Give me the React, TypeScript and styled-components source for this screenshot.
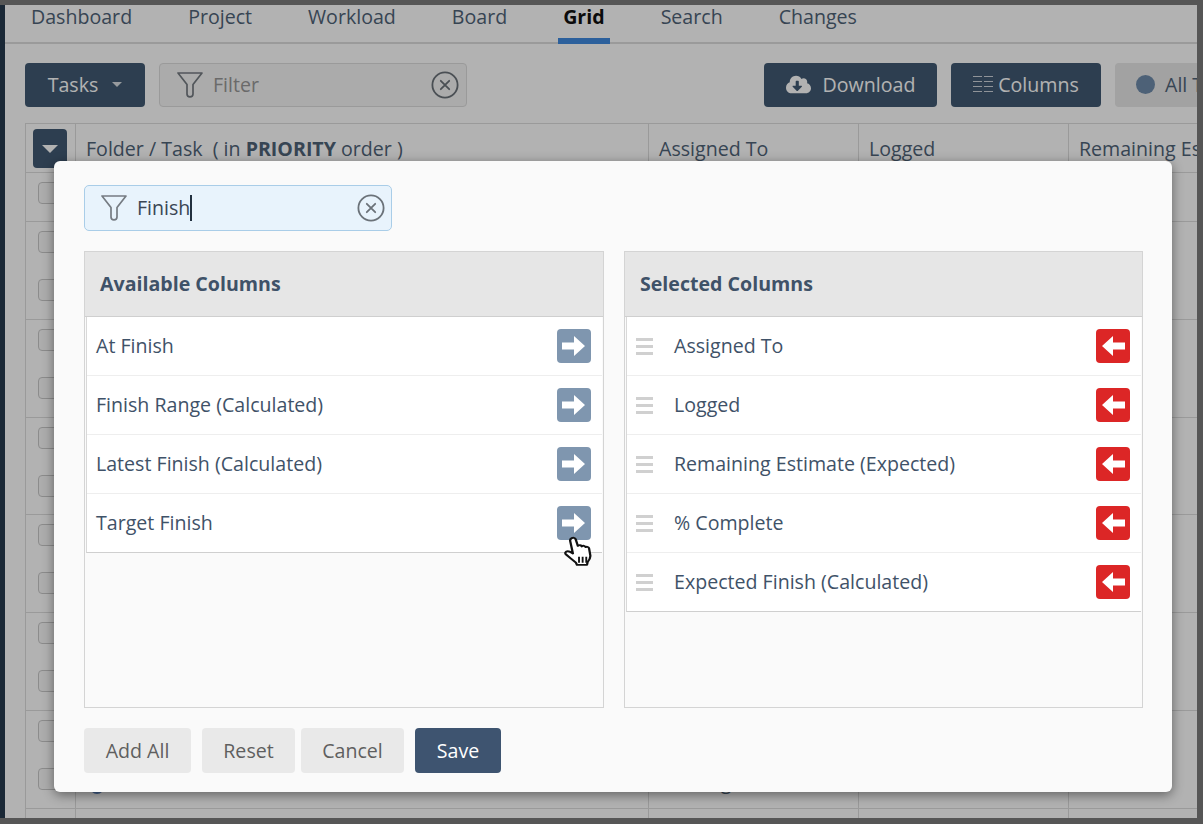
import React from 'react';
import styled, { createGlobalStyle } from 'styled-components';
import { FaCloudDownloadAlt } from 'react-icons/fa';

const TABS = ['Dashboard', 'Project', 'Workload', 'Board', 'Grid', 'Search', 'Changes'];
const AVAILABLE = ['At Finish', 'Finish Range (Calculated)', 'Latest Finish (Calculated)', 'Target Finish'];
const SELECTED = ['Assigned To', 'Logged', 'Remaining Estimate (Expected)', '% Complete', 'Expected Finish (Calculated)'];
const ROW_CHECKS = [1, 2, 2, 2, 2, 2, 2, 1];

const FunnelIcon = () => (
  <svg width="28" height="28" viewBox="0 0 28 28" fill="none" stroke="#757b82" strokeWidth="1.7" strokeLinejoin="round">
    <path d="M2 2h24L17 13.500V23c0 1.500-1 2.800-3 2.800s-3-1.300-3-2.800V13.500z" />
  </svg>
);

const ClearIcon = () => (
  <svg width="28" height="28" viewBox="0 0 28 28" fill="none" stroke="#6b7279" strokeWidth="1.800" strokeLinecap="round">
    <circle cx="14" cy="14" r="12.6" />
    <path d="M9.800 9.800l8.400 8.400M18.200 9.800l-8.400 8.400" />
  </svg>
);

const ColumnsIcon = () => (
  <svg width="20" height="18" viewBox="0 0 20 18" fill="none" stroke="#fff" strokeWidth="1" opacity="0.75">
    <path d="M0 1.500h9M11 1.500h9M0 6.500h9M11 6.500h9M0 11.500h9M11 11.500h9M0 16.500h9M11 16.500h9" />
  </svg>
);

const ArrowRightIcon = () => (
  <svg width="24" height="22" viewBox="0 0 24 22" fill="#fff">
    <path d="M0 7.500h12V1l11 10-11 10v-6.500H0z" />
  </svg>
);

const ArrowLeftIcon = () => (
  <svg width="24" height="22" viewBox="0 0 24 22" fill="#fff">
    <path d="M24 7.500H12V1L1 11l11 10v-6.500h12z" />
  </svg>
);

const HandCursor = () => (
  <svg width="29" height="31" viewBox="0 0 28 36" preserveAspectRatio="none">
    <path
      d="M7.500 2.500c1.800-1 3.400 0 3.900 1.700l2 7.300c1.200-1.400 3.300-1 3.800.6 1.100-1.200 3.200-.8 3.700.8 1.300-.8 3 0 3.300 1.500l1.200 8c.4 3-1 5.500-2.600 7.800l-.6 3.300H12.500l-1-2.500C8.500 28 5 24.500 2 21.500c-1.500-1.600-.5-3.800 1.600-3.800 1.500 0 3.400 1.300 5 2.600L6 6c-.3-1.500.3-2.800 1.500-3.500z"
      fill="#fff"
      stroke="#111"
      strokeWidth="2.200"
      strokeLinejoin="round"
    />
    <path d="M14.500 24v7M18 24v7M21.500 24v7" stroke="#111" strokeWidth="1.800" />
  </svg>
);

const App: React.FC = () => (
  <>
    <GlobalStyle />
    <Frame>
      <SideBar />
      <Page>
        <TabBar>
          {TABS.map((tab) => (
            <Tab key={tab} $active={tab === 'Grid'}>{tab}</Tab>
          ))}
        </TabBar>
        <Toolbar>
          <DarkButton $width={120}>
            Tasks <Caret />
          </DarkButton>
          <PageFilter>
            <FunnelIcon />
            <FilterHint>Filter</FilterHint>
            <ClearIcon />
          </PageFilter>
          <ToolbarRight>
            <DarkButton $width={173}>
              <FaCloudDownloadAlt size={25} /> Download
            </DarkButton>
            <DarkButton $width={150} $tight>
              <ColumnsIcon /> Columns
            </DarkButton>
            <AllButton>
              <Dot /> All Tasks
            </AllButton>
          </ToolbarRight>
        </Toolbar>
        <Table>
          <HeaderRow>
            <Cell $first>
              <MenuToggle />
            </Cell>
            <Cell>
              <span>Folder / Task &nbsp;( in <b>PRIORITY</b> order )</span>
            </Cell>
            <Cell>Assigned To</Cell>
            <Cell>Logged</Cell>
            <Cell>Remaining Estimate</Cell>
          </HeaderRow>
          {ROW_CHECKS.map((count, i) => (
            <BodyRow key={i} $tall={count === 2}>
              <CheckCell>
                {Array.from({ length: count }).map((_, j) => (
                  <CheckBox key={j} />
                ))}
              </CheckCell>
              <BodyCell>{i === 6 && <StatusDot />}</BodyCell>
              <BodyCell>{i === 6 && <AssigneeText>Unassigned</AssigneeText>}</BodyCell>
              <BodyCell />
              <BodyCell />
            </BodyRow>
          ))}
        </Table>
        <Overlay />
        <Modal>
          <ModalFilter>
            <FunnelIcon />
            <FilterValue>
              Finish<TextCaret />
            </FilterValue>
            <ClearIcon />
          </ModalFilter>
          <Panels>
            <Panel>
              <PanelHeader>Available Columns</PanelHeader>
              <RowList>
                {AVAILABLE.map((name) => (
                  <ColumnRow key={name}>
                    <ColumnName>{name}</ColumnName>
                    <MoveButton $tone="add">
                      <ArrowRightIcon />
                    </MoveButton>
                  </ColumnRow>
                ))}
              </RowList>
            </Panel>
            <Panel>
              <PanelHeader>Selected Columns</PanelHeader>
              <RowList>
                {SELECTED.map((name) => (
                  <ColumnRow key={name}>
                    <DragHandle>
                      <i />
                      <i />
                      <i />
                    </DragHandle>
                    <ColumnName>{name}</ColumnName>
                    <MoveButton $tone="remove">
                      <ArrowLeftIcon />
                    </MoveButton>
                  </ColumnRow>
                ))}
              </RowList>
            </Panel>
          </Panels>
          <Actions>
            <GreyButton $width={107}>Add All</GreyButton>
            <GreyButton $width={93} $gap={11}>Reset</GreyButton>
            <GreyButton $width={103} $gap={6}>Cancel</GreyButton>
            <SaveButton>Save</SaveButton>
          </Actions>
        </Modal>
        <CursorSpot>
          <HandCursor />
        </CursorSpot>
      </Page>
    </Frame>
  </>
);

const GlobalStyle = createGlobalStyle`
  html, body {
    margin: 0;
    padding: 0;
    background: #565656;
  }
  * {
    box-sizing: border-box;
  }
  body {
    font-family: "Open Sans", "Noto Sans", sans-serif;
    font-size: 19.6px;
    color: #3f5268;
  }
`;

const Frame = styled.div`
  width: 1203px;
  height: 824px;
  padding: 5px 6px 6px 0;
  display: flex;
  overflow: hidden;
  background: #565656;
`;

const SideBar = styled.div`
  width: 5px;
  background: #1a2836;
  flex-shrink: 0;
`;

const Page = styled.div`
  position: relative;
  flex: 1;
  min-width: 0;
  overflow: hidden;
  background: #fff;
`;

const Overlay = styled.div`
  position: absolute;
  inset: 0;
  background: rgba(0, 0, 0, 0.3);
`;

const TabBar = styled.div`
  height: 39px;
  display: flex;
  gap: 46px;
  padding-left: 21px;
  border-bottom: 2px solid #ddd;
`;

const Tab = styled.div<{ $active?: boolean }>`
  height: 39px;
  padding: 0 5px;
  line-height: 24px;
  color: ${(p) => (p.$active ? '#111' : '#4f6378')};
  font-weight: ${(p) => (p.$active ? 700 : 400)};
  border-bottom: ${(p) => (p.$active ? '6px solid #3f8ae0' : 'none')};
`;

const Toolbar = styled.div`
  display: flex;
  align-items: center;
  gap: 14px;
  padding: 19px 0 16px 20px;
`;

const ToolbarRight = styled.div`
  margin-left: auto;
  margin-right: -88px;
  display: flex;
  gap: 14px;
`;

const DarkButton = styled.div<{ $width: number; $tight?: boolean }>`
  width: ${(p) => p.$width}px;
  height: 44px;
  padding-bottom: 2px;
  display: flex;
  align-items: center;
  justify-content: center;
  gap: ${(p) => (p.$tight ? 5 : 12)}px;
  background: #415a73;
  color: #fff;
  border-radius: 4px;
`;

const Caret = styled.span`
  width: 0;
  height: 0;
  margin-left: 2px;
  border: 5px solid transparent;
  border-top: 5px solid #d8dde2;
  border-bottom: 0;
`;

const PageFilter = styled.div`
  width: 308px;
  height: 44px;
  display: flex;
  align-items: center;
  gap: 9px;
  padding: 0 7px 0 16px;
  border: 1px solid #ddd;
  border-radius: 4px;
  background: #f5f5f5;
`;

const FilterHint = styled.span`
  flex: 1;
  padding-bottom: 2px;
  color: #999;
`;

const AllButton = styled.div`
  width: 170px;
  height: 44px;
  padding: 0 0 2px 21px;
  display: flex;
  align-items: center;
  gap: 10px;
  background: #e8e8e8;
  border-radius: 4px;
  color: #4f6378;
  white-space: nowrap;
`;

const Dot = styled.span`
  width: 19px;
  height: 19px;
  border-radius: 50%;
  background: #6f8cab;
`;

const Table = styled.div`
  margin-left: 20px;
  width: 1300px;
  border-top: 1px solid #ddd;
  border-left: 1px solid #ddd;
`;

const HeaderRow = styled.div`
  height: 49px;
  display: grid;
  grid-template-columns: 50px 573px 210px 210px 1fr;
  border-bottom: 1px solid #ddd;
`;

const Cell = styled.div<{ $first?: boolean }>`
  display: flex;
  align-items: center;
  padding-left: ${(p) => (p.$first ? 7 : 10)}px;
  border-right: 1px solid #ddd;
  color: #4f6378;
  white-space: nowrap;

  b {
    font-weight: 700;
  }
`;

const MenuToggle = styled.div`
  width: 34px;
  height: 39px;
  position: relative;
  border-radius: 4px;
  background: #415a73;

  &::after {
    content: '';
    position: absolute;
    left: 9px;
    top: 16px;
    border: 8px solid transparent;
    border-top: 8px solid #fff;
    border-bottom: 0;
  }
`;

const BodyRow = styled.div<{ $tall: boolean }>`
  height: ${(p) => (p.$tall ? 97.8 : 49)}px;
  display: grid;
  grid-template-columns: 50px 573px 210px 210px 1fr;
  border-bottom: 1px solid #ddd;
`;

const CheckCell = styled.div`
  display: flex;
  flex-direction: column;
  gap: 26px;
  padding: 9px 0 0 12px;
  border-right: 1px solid #ddd;
`;

const BodyCell = styled.div`
  position: relative;
  border-right: 1px solid #ddd;
`;

const StatusDot = styled.span`
  position: absolute;
  left: 14px;
  bottom: 14px;
  width: 14px;
  height: 14px;
  border-radius: 50%;
  background: #5b84c0;
`;

const AssigneeText = styled.span`
  position: absolute;
  left: 11px;
  bottom: 13px;
  color: #4f6378;
`;

const CheckBox = styled.div`
  width: 22px;
  height: 22px;
  border: 1px solid #c9c9c9;
  border-radius: 4px;
  background: #f8f8f8;
`;

const Modal = styled.div`
  position: absolute;
  left: 49px;
  top: 156px;
  width: 1118px;
  height: 631px;
  padding: 24px 29px 0 30px;
  background: #fafafa;
  border-radius: 6px;
  box-shadow: 0 3px 12px rgba(0, 0, 0, 0.45);
`;

const ModalFilter = styled.div`
  width: 308px;
  height: 46px;
  display: flex;
  align-items: center;
  gap: 9px;
  padding: 0 6px 0 15px;
  background: #e8f3fc;
  border: 1px solid #a9cde8;
  border-radius: 5px;
`;

const FilterValue = styled.span`
  flex: 1;
  padding-bottom: 1px;
  display: flex;
  align-items: center;
  color: #3a4654;
`;

const TextCaret = styled.span`
  width: 2px;
  height: 26px;
  background: #22303f;
`;

const Panels = styled.div`
  margin-top: 20px;
  display: grid;
  grid-template-columns: 520px 519px;
  gap: 20px;
`;

const Panel = styled.div`
  height: 457px;
  border: 1px solid #d4d4d4;
  background: #fafafa;
`;

const PanelHeader = styled.div`
  height: 65px;
  padding: 0 0 2px 15px;
  display: flex;
  align-items: center;
  background: #e6e6e6;
  border-bottom: 1px solid #cfcfcf;
  font-weight: 700;
  color: #3f5268;
`;

const RowList = styled.div`
  background: #fff;
  margin-left: 1px;
  margin-right: 1px;
  border-left: 1px solid #d8d8d8;
  border-bottom: 1px solid #cfcfcf;
`;

const ColumnRow = styled.div`
  height: 59px;
  display: flex;
  align-items: center;
  padding: 0 11px 0 9px;
  border-bottom: 1px solid #eee;

  &:last-child {
    border-bottom: none;
    height: 58px;
  }
`;

const ColumnName = styled.span`
  flex: 1;
  padding-bottom: 1px;
  color: #3f5268;
`;

const DragHandle = styled.span`
  width: 17px;
  margin-right: 21px;
  display: flex;
  flex-direction: column;
  gap: 4px;

  i {
    height: 3px;
    background: #d0d0d0;
  }
`;

const MoveButton = styled.div<{ $tone: 'add' | 'remove' }>`
  width: 34px;
  height: 34px;
  display: flex;
  align-items: center;
  justify-content: center;
  border-radius: 4px;
  background: ${(p) => (p.$tone === 'add' ? '#7f96af' : '#dc2626')};
`;

const Actions = styled.div`
  margin-top: 20px;
  display: flex;
`;

const GreyButton = styled.div<{ $width: number; $gap?: number }>`
  width: ${(p) => p.$width}px;
  height: 45px;
  margin-left: ${(p) => p.$gap ?? 0}px;
  display: flex;
  align-items: center;
  justify-content: center;
  background: #e9e9e9;
  border-radius: 4px;
  color: #5f5f5f;
`;

const SaveButton = styled.div`
  width: 86px;
  height: 45px;
  margin-left: 11px;
  display: flex;
  align-items: center;
  justify-content: center;
  background: #3e5470;
  border-radius: 4px;
  color: #fff;
`;

const CursorSpot = styled.div`
  position: absolute;
  left: 559px;
  top: 531px;
`;

export default App;
